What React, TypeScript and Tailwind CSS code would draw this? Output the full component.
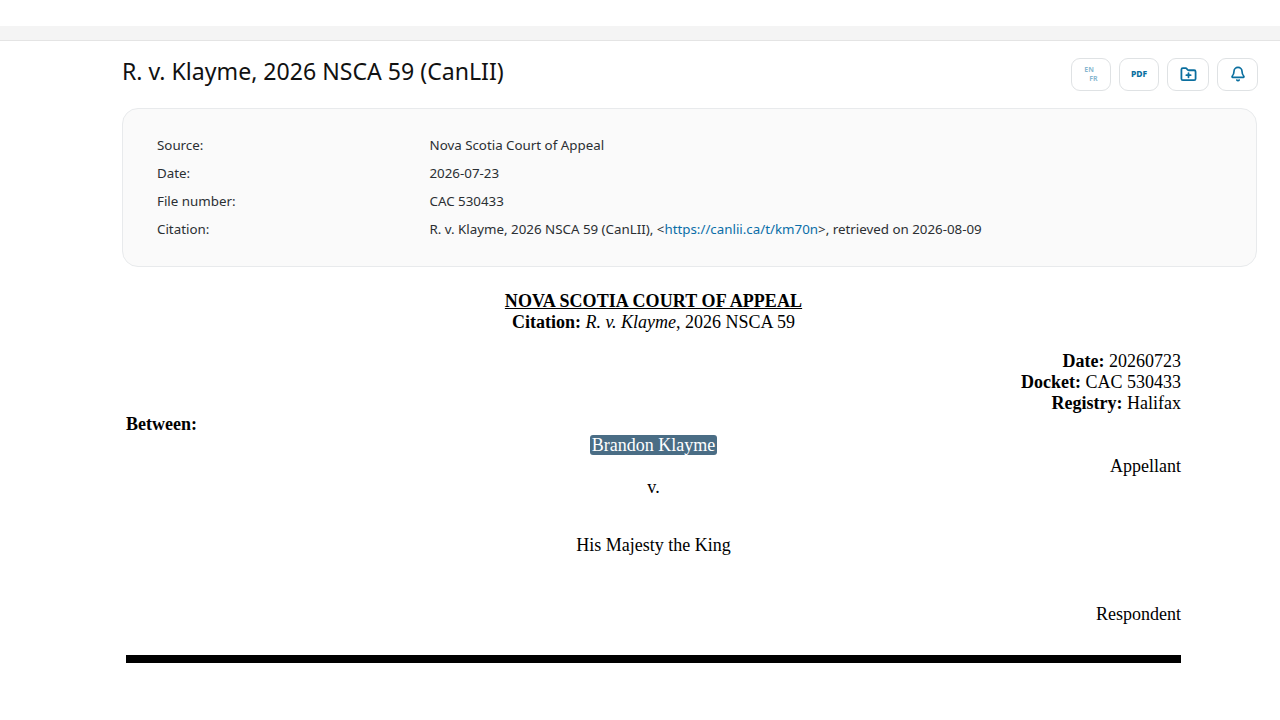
import { Bell, FolderPlus } from "lucide-react";

const meta = [
  { label: "Source:", value: <>Nova Scotia Court of Appeal</> },
  { label: "Date:", value: <>2026-07-23</> },
  { label: "File number:", value: <>CAC 530433</> },
  {
    label: "Citation:",
    value: (
      <>
        R. v. Klayme, 2026 NSCA 59 (CanLII), &lt;
        <span className="text-[#0a6ea8]">https://canlii.ca/t/km70n</span>
        &gt;, retrieved on 2026-08-09
      </>
    ),
  },
];

const btn =
  "flex h-[33px] items-center justify-center rounded-[9px] border border-[#dfe2e4] bg-white pb-[1px] text-[#0b6f9f]";

export default function App() {
  return (
    <div className="h-[720px] overflow-hidden bg-white font-['Noto_Sans',sans-serif] text-[#2b2f33]">
      <div className="h-[26px]" />
      <div className="h-[15px] border-b border-[#e4e4e4] bg-[#f4f4f4]" />

      <main className="pl-[122px] pr-[22px]">
        <div className="flex h-[67px] items-start justify-between">
          <h1 className="mt-[12px] text-[23.1px] leading-[36px] text-[#111]">
            R. v. Klayme, 2026 NSCA 59 (CanLII)
          </h1>
          <div className="mt-[17px] flex gap-[8px]">
            <div className={btn + " w-[40px] text-[#0b6f9f]/50"}>
              <div className="flex flex-col text-[7px] leading-[9px] font-bold">
                <span>EN</span>
                <span className="pl-[5px]">FR</span>
              </div>
            </div>
            <div className={btn + " w-[40px] text-[8.5px] font-extrabold"}>PDF</div>
            <div className={btn + " w-[42px]"}>
              <FolderPlus className="h-[17px] w-[17px]" strokeWidth={2.5} />
            </div>
            <div className={btn + " w-[41px]"}>
              <Bell className="h-[16px] w-[16px]" strokeWidth={2.5} />
            </div>
          </div>
        </div>

        <section className="mr-[1px] h-[159px] rounded-[16px] border border-[#e8eaec] bg-[#fafafa] px-[34px] pt-[22px] text-[13.33px] leading-[28px]">
          {meta.map((row) => (
            <div key={row.label} className="flex">
              <div className="w-[272.5px]">{row.label}</div>
              <div>{row.value}</div>
            </div>
          ))}
        </section>

        <article className="mt-[24px] w-[1059px] pl-[4px] font-['Liberation_Serif',serif] text-[18px] leading-[21px] text-black">
          <p className="text-center font-bold tracking-[0.08px] underline">NOVA SCOTIA COURT OF APPEAL</p>
          <p className="text-center">
            <b>Citation:</b> <i>R. v. Klayme</i>, 2026 NSCA 59
          </p>
          <div className="mt-[18px] text-right">
            <p>
              <b>Date:</b> 20260723
            </p>
            <p>
              <b>Docket:</b> CAC 530433
            </p>
            <p>
              <b>Registry:</b> Halifax
            </p>
          </div>
          <p className="font-bold">Between:</p>
          <p className="text-center">
            <span className="rounded-[3px] bg-[#4a6d85] px-[2px] text-white">Brandon Klayme</span>
          </p>
          <p className="text-right">Appellant</p>
          <p className="text-center">v.</p>
          <p className="mt-[37px] text-center">His Majesty the King</p>
          <p className="mt-[48px] text-right">Respondent</p>
          <div className="mt-[30px] h-[8px] bg-black" />
        </article>
      </main>
    </div>
  );
}
